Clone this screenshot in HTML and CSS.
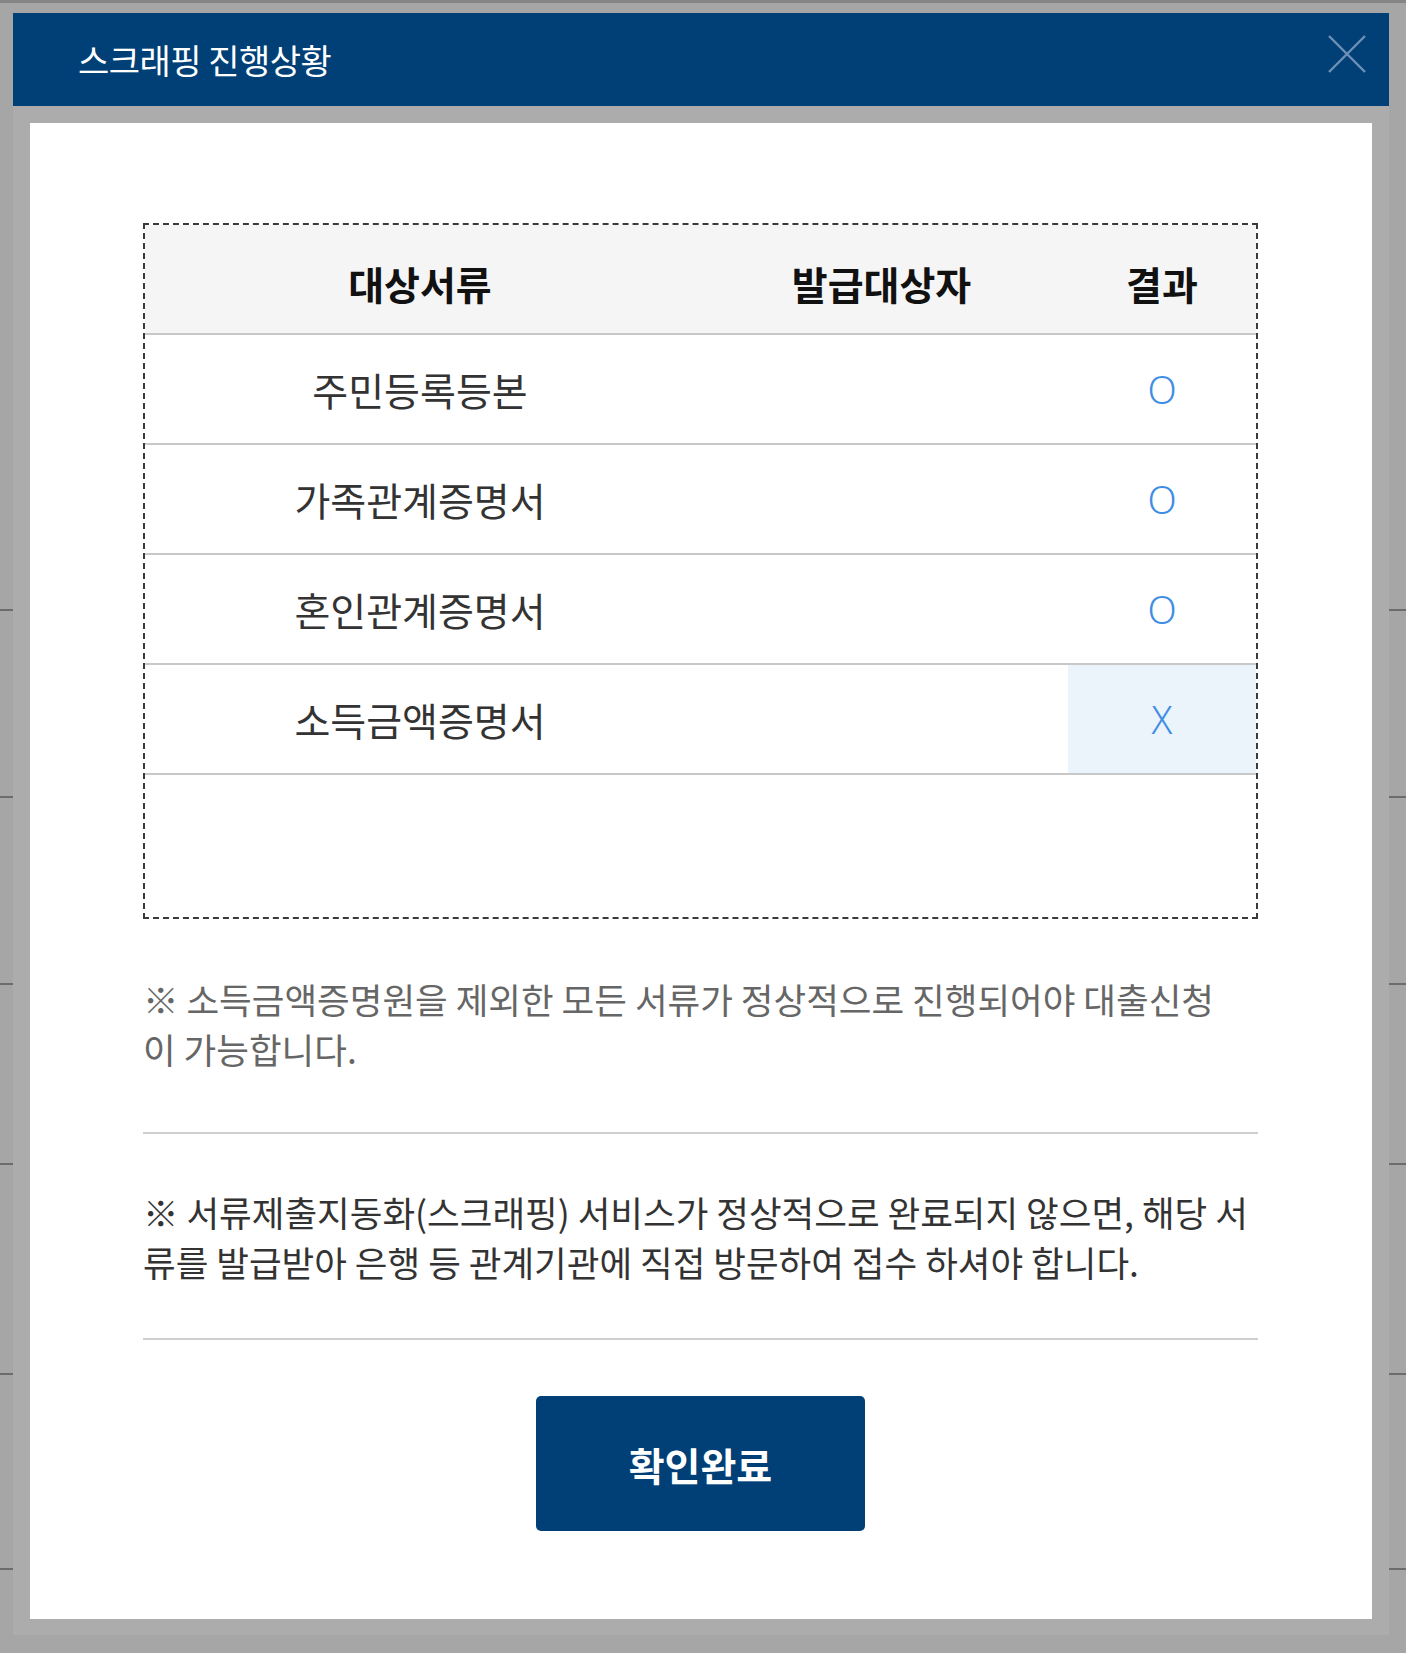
FILE: index.html
```html
<html>

<head>
    <meta charset="UTF-8">
    <meta name="viewport" content="width=device-width,initial-scale=1">
    <link rel="stylesheet" href="styles.css">
</head>

<body>
    <div class="backdrop">
        <div class="bg-row r1"></div>
        <div class="bg-row r2"></div>
        <div class="bg-row r3"></div>
        <div class="bg-row r4"></div>
        <div class="bg-row r5"></div>
        <div class="bg-row r6"></div>
    </div>

    <div class="modal">
        <div class="modal-head">
            <h1 class="modal-title">스크래핑 진행상황</h1>
            <button class="close" aria-label="닫기">
                <svg width="40" height="40" viewBox="0 0 40 40">
                    <path d="M2 2 L38 38 M38 2 L2 38" stroke="#6f90b6" stroke-width="2.4" fill="none" />
                </svg>
            </button>
        </div>
        <div class="modal-frame">
            <div class="modal-body">
                <div class="docs">
                    <table class="doc-table">
                        <colgroup>
                            <col class="c-doc">
                            <col class="c-who">
                            <col class="c-res">
                        </colgroup>
                        <thead>
                            <tr>
                                <th>대상서류</th>
                                <th>발급대상자</th>
                                <th>결과</th>
                            </tr>
                        </thead>
                        <tbody>
                            <tr>
                                <td>주민등록등본</td>
                                <td></td>
                                <td class="res">O</td>
                            </tr>
                            <tr>
                                <td>가족관계증명서</td>
                                <td></td>
                                <td class="res">O</td>
                            </tr>
                            <tr>
                                <td>혼인관계증명서</td>
                                <td></td>
                                <td class="res">O</td>
                            </tr>
                            <tr>
                                <td>소득금액증명서</td>
                                <td></td>
                                <td class="res fail">X</td>
                            </tr>
                        </tbody>
                    </table>
                </div>

                <p class="note light">※ 소득금액증명원을 제외한 모든 서류가 정상적으로 진행되어야 대출신청<br>이 가능합니다.</p>
                <p class="note last">※ 서류제출지동화(스크래핑) 서비스가 정상적으로 완료되지 않으면, 해당 서류를 발급받아 은행 등 관계기관에 직접 방문하여 접수 하셔야 합니다.</p>

                <div class="actions">
                    <button class="confirm">확인완료</button>
                </div>
            </div>
        </div>
    </div>
</body>

</html>
```

FILE: styles.css
```css
* {
    margin: 0;
    padding: 0;
    box-sizing: border-box;
}

body {
    height: 1653px;
    overflow: hidden;
    background-color: #a6a6a6;
    border-top: 3px solid #858585;
    font-family: "Noto Sans CJK KR", "Noto Sans", sans-serif;
    position: relative;
}

/* page under the dimmed overlay, only its edges show */
.bg-row {
    border-bottom: 2px solid #6c6c6c;
}

.r1 { height: 608px; }
.r2 { height: 187px; }
.r3 { height: 187px; }
.r4 { height: 180px; }
.r5 { height: 210px; }
.r6 { height: 195px; }

.modal {
    position: absolute;
    top: 10px;
    left: 13px;
    width: 1376px;
}

.modal-head {
    height: 93px;
    background-color: #004077;
    display: flex;
    align-items: center;
    justify-content: space-between;
    padding: 0 22px 0 65px;
}

.modal-title {
    color: #fff;
    font-size: 34px;
    font-weight: normal;
    letter-spacing: -0.5px;
}

.close {
    border: none;
    background: none;
    width: 40px;
    height: 40px;
    margin-top: -12px;
    cursor: pointer;
}

.modal-frame {
    background-color: #acacac;
    padding: 17px 17px 16px;
}

.modal-body {
    background-color: #fff;
    padding: 100px 114px 88px 113px;
}

.docs {
    border: 2px dashed #3a3a3a;
    padding-bottom: 142px;
}

.doc-table {
    width: 100%;
    border-collapse: separate;
    border-spacing: 0;
    font-size: 39px;
    color: #333;
}

.c-doc { width: 550px; }
.c-who { width: 373px; }

.doc-table th {
    height: 110px;
    background-color: #f5f5f5;
    border-bottom: 2px solid #c8c8c8;
    color: #111;
    font-weight: bold;
    padding-top: 8px;
}

.doc-table td {
    height: 110px;
    border-bottom: 2px solid #c8c8c8;
    text-align: center;
}

.doc-table .res {
    color: #3f8de4;
    font-family: "Noto Sans", sans-serif;
    font-weight: 300;
    font-size: 38px;
}

.doc-table .fail {
    background-color: #ebf3fb;
}

.note {
    font-size: 35.5px;
    line-height: 50px;
    color: #333;
    word-break: break-all;
    padding: 53px 0 58px;
    border-bottom: 2px solid #cfcfcf;
}

.note.light {
    color: #666;
    margin-top: 2px;
}

.note.last {
    padding-bottom: 51px;
}

.actions {
    display: flex;
    justify-content: center;
    padding-top: 56px;
}

.confirm {
    width: 329px;
    height: 135px;
    border: none;
    border-radius: 5px;
    background-color: #004077;
    color: #fff;
    font-family: inherit;
    font-size: 39px;
    font-weight: bold;
    cursor: pointer;
}
```
